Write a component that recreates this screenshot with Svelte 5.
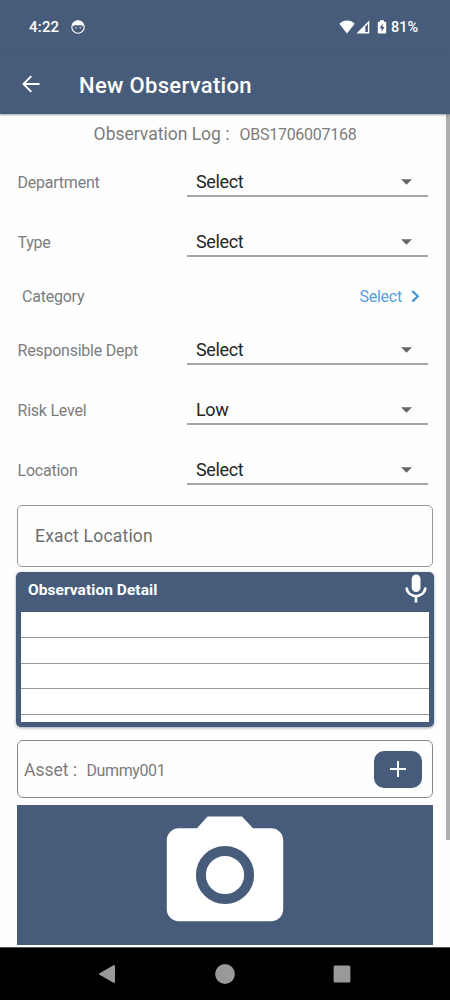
<!--
  NewObservation — entry form for a safety observation.
  Status bar and app bar on top, scrolling form, system nav at the bottom.
-->
<script lang="ts">
  type Field = { label: string; value: string; kind: 'dropdown' | 'link' };

  const logNumber = 'OBS1706007168';
  const asset = 'Dummy001';

  const fields: Field[] = [
    { label: 'Department', value: 'Select', kind: 'dropdown' },
    { label: 'Type', value: 'Select', kind: 'dropdown' },
    { label: 'Category', value: 'Select', kind: 'link' },
    { label: 'Responsible Dept', value: 'Select', kind: 'dropdown' },
    { label: 'Risk Level', value: 'Low', kind: 'dropdown' },
    { label: 'Location', value: 'Select', kind: 'dropdown' }
  ];
</script>

<div class="screen">
  <div class="status">
    <span class="time">4:22</span>
    <svg class="face" viewBox="0 0 14 14" width="14" height="14">
      <circle cx="7" cy="7" r="6.2" fill="none" stroke="#fff" stroke-width="1.1" />
      <path d="M1 6.200C1.500 2.600 4.200.8 7 .8s5.500 1.800 6 5.400C11.500 6.200 10.500 5.700 9.700 5 8 5.600 6 5.600 4.300 5 3.500 5.700 2.500 6.200 1 6.200z" fill="#fff" />
      <circle cx="4.800" cy="7.700" r=".7" fill="#fff" />
      <circle cx="9.200" cy="7.700" r=".7" fill="#fff" />
    </svg>
    <svg class="wifi" viewBox="0 0 16 14" width="16" height="14">
      <path d="M8 13.600.3 3.800C2.300 1.700 5 .5 8 .5s5.700 1.200 7.700 3.300z" fill="#fff" />
    </svg>
    <svg class="signal" viewBox="0 0 14 14" width="14" height="14">
      <path d="M13.300.5v13H.4z M11.900 4 9.300 6.600v5.500h2.600z" fill="#fff" fill-rule="evenodd" />
    </svg>
    <svg class="battery" viewBox="0 0 10 14" width="10" height="14">
      <path d="M3 .3h4v1.400h1.300c.5 0 .9.400.9.900v10c0 .5-.4.900-.9.900H1.700c-.5 0-.9-.4-.9-.9v-10c0-.5.4-.9.900-.9H3z" fill="#fff" />
      <path d="M5.700 3.600 2.700 8.300h1.900v3.400l2.900-4.800H5.700z" fill="#475c7a" />
    </svg>
    <span class="percent">81%</span>
  </div>

  <header>
    <button type="button" class="back" aria-label="Back">
      <svg viewBox="0 0 18 18" width="18" height="18">
        <path d="M17.500 9H1.500M9.300 1.200 1.500 9l7.800 7.800" fill="none" stroke="#fff" stroke-width="1.900" />
      </svg>
    </button>
    <h1>New Observation</h1>
  </header>

  <main>
    <div class="scrollbar"></div>

    <p class="log">
      <span class="log-label">Observation Log :</span>
      <span class="log-number">{logNumber}</span>
    </p>

    {#each fields as field (field.label)}
      <div class="field" class:is-link={field.kind === 'link'}>
        <span class="label">{field.label}</span>
        {#if field.kind === 'link'}
          <button type="button" class="link">
            {field.value}
            <svg viewBox="0 0 9 13" width="9" height="13">
              <path d="M1.300 1 6.800 6.300l-5.500 5.300" fill="none" stroke="#4296d6" stroke-width="2.200" />
            </svg>
          </button>
        {:else}
          <button type="button" class="dropdown">
            {field.value}
            <svg viewBox="0 0 11 6" width="11" height="6">
              <path d="M0 .2h11L5.500 5.700z" fill="#666" />
            </svg>
          </button>
        {/if}
      </div>
    {/each}

    <div class="exact">Exact Location</div>

    <section class="detail">
      <div class="detail-head">
        <h2>Observation Detail</h2>
        <svg viewBox="0 0 22 29" width="22" height="29">
          <rect x="6.700" y=".5" width="8.800" height="17.500" rx="4.400" fill="#fff" />
          <path d="M1.700 13.500c0 5 4.200 8.500 9.300 8.500s9.300-3.500 9.300-8.500M11 22v6.500" fill="none" stroke="#fff" stroke-width="2.600" />
        </svg>
      </div>
      <div class="paper">
        {#each Array(4) as _}
          <div class="line"></div>
        {/each}
      </div>
    </section>

    <div class="asset">
      <span class="asset-label">Asset :</span>
      <span class="asset-name">{asset}</span>
      <button type="button" class="add" aria-label="Add asset">
        <svg viewBox="0 0 16 16" width="16" height="16">
          <path d="M8 0v16M0 8h16" stroke="#fff" stroke-width="2" />
        </svg>
      </button>
    </div>

    <button type="button" class="camera" aria-label="Take photo">
      <svg viewBox="0 0 118 106" width="118" height="106">
        <path d="M41.500.5h34.500L87 12.300h18a12 12 0 0 1 12.200 12v69a12 12 0 0 1-12.200 12H13a12 12 0 0 1-12.200-12v-69a12 12 0 0 1 12.200-12h18z" fill="#fff" />
        <circle cx="59" cy="59" r="24.100" fill="#fff" stroke="#475c7a" stroke-width="10" />
      </svg>
    </button>
  </main>

  <nav>
    <svg viewBox="0 0 18 20" width="18" height="20">
      <path d="M2 10 16 2v16z" fill="#9b989b" stroke="#9b989b" stroke-width="2" stroke-linejoin="round" />
    </svg>
    <svg viewBox="0 0 20 20" width="20" height="20">
      <circle cx="10" cy="10" r="9.900" fill="#9b989b" />
    </svg>
    <svg viewBox="0 0 18 18" width="18" height="18">
      <rect x=".6" y=".6" width="16.800" height="16.800" rx="1.500" fill="#9b989b" />
    </svg>
  </nav>
</div>

<style>
  :global(body) {
    background: #fff;
  }
  .screen {
    --blue: #475c7a;
    display: flex;
    flex-direction: column;
    width: 450px;
    height: 1000px;
    overflow: hidden;
    font-family: Roboto, 'Liberation Sans', sans-serif;
    background: #fefefe;
  }
  svg {
    display: block;
    flex: none;
  }
  button {
    border: none;
    background: none;
    padding: 0;
    font: inherit;
    color: inherit;
    cursor: pointer;
  }
  h1,
  h2,
  p {
    margin: 0;
  }

  .status {
    display: flex;
    align-items: center;
    box-sizing: border-box;
    height: 54px;
    padding: 0 32px 0 29px;
    background: var(--blue);
    color: #fff;
    font-size: 15px;
    font-weight: 500;
  }
  .time {
    width: 42px;
    letter-spacing: 0.2px;
  }
  .wifi {
    margin-left: auto;
  }
  .signal {
    margin-left: 1px;
  }
  .battery {
    margin: 0 4px 0 7px;
  }
  .percent {
    width: 27px;
    white-space: nowrap;
    font-size: 14.5px;
  }

  header {
    display: flex;
    align-items: center;
    height: 60px;
    padding-left: 22px;
    background: var(--blue);
    color: #fff;
    box-shadow: 0 1px 2px rgba(60, 70, 90, 0.5);
    z-index: 1;
  }
  .back {
    width: 57px;
  }
  h1 {
    padding-top: 2px;
    font-size: 22px;
    font-weight: 500;
    letter-spacing: 0.32px;
  }

  main {
    position: relative;
    display: flex;
    flex-direction: column;
    height: 833px;
    padding: 0 17px;
  }
  .scrollbar {
    position: absolute;
    top: 0;
    right: 0;
    width: 4.5px;
    height: 726px;
    background: #aeaeae;
  }
  .log {
    display: flex;
    align-items: baseline;
    justify-content: center;
    gap: 10px;
    height: 29px;
    padding-top: 9px;
    color: #7c7c7c;
    line-height: 22px;
  }
  .log-label {
    font-size: 17.5px;
  }
  .log-number {
    font-size: 16px;
    letter-spacing: -0.27px;
  }

  .field {
    display: flex;
    align-items: center;
    justify-content: space-between;
    height: 60px;
    padding: 0 5px 0 0.5px;
  }
  .field.is-link {
    height: 48px;
    padding: 0 13px 0 5px;
  }
  .label {
    color: #7c7c7c;
    font-size: 16px;
    letter-spacing: -0.23px;
  }
  .dropdown {
    display: flex;
    align-items: center;
    justify-content: space-between;
    box-sizing: border-box;
    width: 241px;
    height: 30px;
    padding: 1px 16px 0 9px;
    border-bottom: 2px solid #a6a6a6;
    color: #262626;
    font-size: 18px;
    letter-spacing: -0.35px;
  }
  .link {
    display: flex;
    align-items: center;
    gap: 9px;
    color: #559fdd;
    font-size: 16px;
    letter-spacing: -0.23px;
  }

  .exact {
    display: flex;
    align-items: center;
    box-sizing: border-box;
    height: 62px;
    margin-top: 5px;
    padding-left: 17px;
    border: 1px solid #999;
    border-radius: 5px;
    color: #6e6e6e;
    font-size: 17.5px;
    letter-spacing: 0.2px;
  }

  .detail {
    box-sizing: border-box;
    height: 155px;
    margin: 5px -1px 0;
    padding: 0 5px 5px;
    border-radius: 5px;
    background: var(--blue);
    box-shadow: 0 1px 3px rgba(60, 80, 110, 0.5);
  }
  .detail-head {
    display: flex;
    justify-content: space-between;
    height: 40px;
    padding: 0 2px 0 7px;
    color: #fff;
  }
  .detail-head svg {
    margin-top: 2px;
  }
  h2 {
    font-size: 15.5px;
    font-weight: 700;
    line-height: 36px;
    letter-spacing: 0.05px;
  }
  .paper {
    height: 110px;
    overflow: hidden;
    background: #fff;
  }
  .line {
    box-sizing: border-box;
    height: 25.8px;
    border-bottom: 1px solid #9a9a9a;
  }

  .asset {
    display: flex;
    align-items: center;
    box-sizing: border-box;
    height: 58px;
    margin-top: 13px;
    padding: 0 10px 0 6px;
    border: 1px solid #888;
    border-radius: 6px;
    color: #7c7c7c;
  }
  .asset-label {
    padding-top: 1px;
    font-size: 17.5px;
    width: 62.5px;
  }
  .asset-name {
    padding-top: 2px;
    font-size: 16px;
    letter-spacing: -0.4px;
  }
  .add {
    display: grid;
    place-items: center;
    width: 48px;
    height: 37px;
    margin-left: auto;
    border-radius: 10px;
    background: var(--blue);
  }

  .camera {
    display: flex;
    justify-content: center;
    box-sizing: border-box;
    height: 140px;
    margin-top: 7px;
    padding-top: 11px;
    background: var(--blue);
  }

  nav {
    display: flex;
    align-items: center;
    justify-content: space-between;
    flex: 1;
    padding: 0 99px 0 98px;
    border-top: 1px solid #555;
    background: #000;
  }
</style>
